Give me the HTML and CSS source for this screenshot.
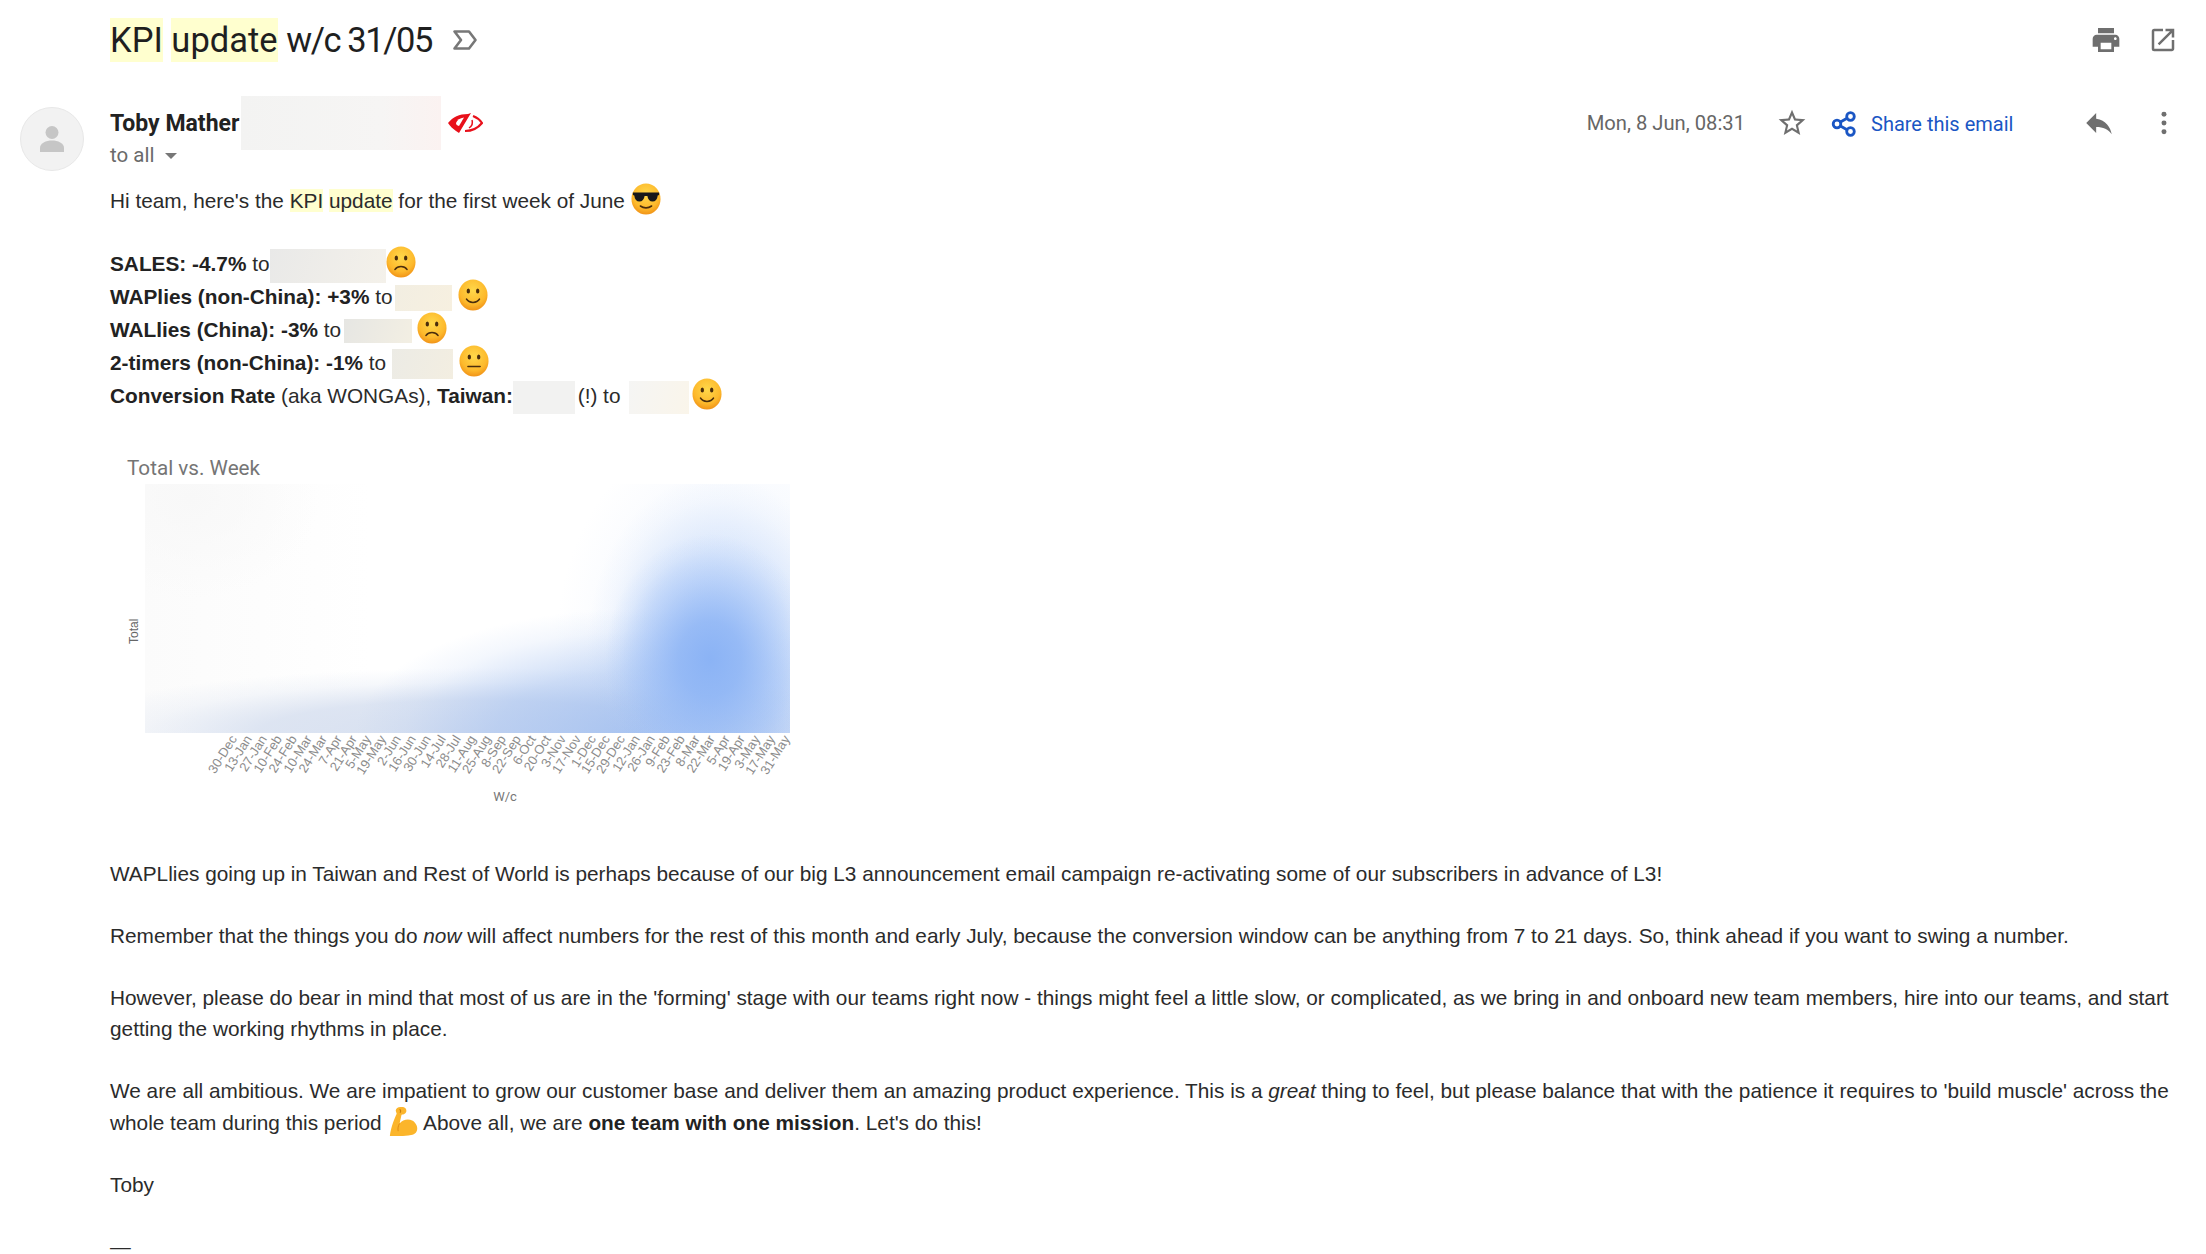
FILE: index.html
```html
<!DOCTYPE html>
<html lang="en">
<head>
<meta charset="utf-8">
<title>KPI update w/c 31/05</title>
<link rel="stylesheet" href="styles.css">
</head>
<body>
<svg class="defs" width="0" height="0" aria-hidden="true">
  <defs>
    <radialGradient id="face" cx="50%" cy="35%" r="70%">
      <stop offset="0" stop-color="#ffd84a"/><stop offset=".65" stop-color="#fdb92c"/><stop offset="1" stop-color="#ee8a12"/>
    </radialGradient>
    <symbol id="sad" viewBox="0 0 32 32" preserveAspectRatio="none">
      <circle cx="16" cy="16" r="15.5" fill="url(#face)"/>
      <ellipse cx="11" cy="12" rx="1.8" ry="2.6" fill="#4a2d0c"/><ellipse cx="21" cy="12" rx="1.8" ry="2.6" fill="#4a2d0c"/>
      <path d="M9.5 23.5c3-4 10-4 13 0" fill="none" stroke="#4a2d0c" stroke-width="1.5" stroke-linecap="round"/>
    </symbol>
    <symbol id="smile" viewBox="0 0 32 32" preserveAspectRatio="none">
      <circle cx="16" cy="16" r="15.5" fill="url(#face)"/>
      <ellipse cx="11" cy="12" rx="1.8" ry="2.6" fill="#4a2d0c"/><ellipse cx="21" cy="12" rx="1.8" ry="2.6" fill="#4a2d0c"/>
      <path d="M9 20c3 4.500 11 4.500 14 0" fill="none" stroke="#4a2d0c" stroke-width="1.500" stroke-linecap="round"/>
    </symbol>
    <symbol id="neutral" viewBox="0 0 32 32" preserveAspectRatio="none">
      <circle cx="16" cy="16" r="15.500" fill="url(#face)"/>
      <ellipse cx="11" cy="12" rx="1.800" ry="2.600" fill="#4a2d0c"/><ellipse cx="21" cy="12" rx="1.800" ry="2.600" fill="#4a2d0c"/>
      <path d="M9.500 21.500h13" fill="none" stroke="#4a2d0c" stroke-width="1.600" stroke-linecap="round"/>
    </symbol>
  </defs>
</svg>

<header class="subject-bar">
  <h1 class="subject"><mark class="hl hl-title">KPI</mark> <mark class="hl hl-title">update</mark> <span class="subject-rest">w/c 31/05</span></h1>
  <svg class="label-icon" viewBox="0 0 26 22"><path d="M2.500 2.500h14.500l6.500 8.500-6.500 8.500H2.500L9 11z" fill="none" stroke="#777" stroke-width="2.600" stroke-linejoin="round"/></svg>
  <div class="subject-actions">
    <svg class="print-icon" viewBox="0 0 24 24"><path fill="#6f6f6f" d="M19 8H5c-1.660 0-3 1.340-3 3v6h4v4h12v-4h4v-6c0-1.660-1.340-3-3-3zm-3 11H8v-5h8v5zm3-7c-.550 0-1-.450-1-1s.450-1 1-1 1 .450 1 1-.450 1-1 1zm-1-9H6v4h12V3z"/></svg>
    <svg class="open-icon" viewBox="0 0 24 24"><path fill="#6f6f6f" d="M19 19H5V5h7V3H5a2 2 0 0 0-2 2v14a2 2 0 0 0 2 2h14c1.100 0 2-.900 2-2v-7h-2v7zM14 3v2h3.590l-9.830 9.830 1.410 1.410L19 6.410V10h2V3h-7z"/></svg>
  </div>
</header>

<section class="message">
  <div class="avatar">
    <svg viewBox="0 0 28 30"><circle cx="14" cy="8.500" r="6.500" fill="#c6c6c6"/><path d="M2 28v-4c0-5 6-7.500 12-7.500S26 19 26 24v4z" fill="#c6c6c6"/></svg>
  </div>
  <div class="content">
    <div class="meta">
      <div class="sender">
        <div class="from-line">
          <strong class="name">Toby Mather</strong>
          <span class="redact redact-email"></span>
          <svg class="eye" viewBox="0 0 36 22"><path d="M1 11C6 5 12 2 21 2l3-1-12 20-3-2c-3-2-6-5-8-8z" fill="#e8101a"/><path d="M9 11c1-3 4-5 8-5.500L12 14c-2-.500-3-1.500-3-3z" fill="#fff"/><path d="M26 4c4 1.500 7 4 9 7-4 5-10 8-17 8" fill="none" stroke="#e8101a" stroke-width="2.200"/><path d="M25 8c1 3 0 6-3 8" fill="none" stroke="#e8101a" stroke-width="1.500"/></svg>
        </div>
        <div class="to-line">to all <span class="caret"></span></div>
      </div>
      <div class="meta-right">
        <span class="date">Mon, 8 Jun, 08:31</span>
        <svg class="star" viewBox="0 0 24 24"><path fill="#6f6f6f" d="M22 9.240l-7.190-.620L12 2 9.190 8.630 2 9.240l5.460 4.730L5.820 21 12 17.270 18.180 21l-1.630-7.030L22 9.240zM12 15.400l-3.760 2.270 1-4.280-3.320-2.880 4.380-.380L12 6.100l1.710 4.040 4.380.380-3.320 2.880 1 4.280L12 15.400z"/></svg>
        <span class="share">
          <svg viewBox="0 0 26 26"><g fill="none" stroke="#1a56c4" stroke-width="2.800"><circle cx="6" cy="13" r="3.800"/><circle cx="19.500" cy="5.500" r="3.800"/><circle cx="19.500" cy="20.500" r="3.800"/><path d="M9.500 11l6.500-3.700M9.500 15l6.500 3.700"/></g></svg>
          Share this email
        </span>
        <svg class="reply" viewBox="0 0 24 24"><path fill="#6f6f6f" d="M10 9V5l-7 7 7 7v-4.100c5 0 8.500 1.600 11 5.100-1-5-4-10-11-11z"/></svg>
        <svg class="more" viewBox="0 0 6 24"><circle cx="3" cy="4" r="2.300" fill="#6f6f6f"/><circle cx="3" cy="12" r="2.300" fill="#6f6f6f"/><circle cx="3" cy="20" r="2.300" fill="#6f6f6f"/></svg>
      </div>
    </div>

    <div class="body">
      <p class="greeting">Hi team, here's the <mark class="hl">KPI</mark> <mark class="hl">update</mark> for the first week of June
        <svg class="emoji cool" viewBox="0 0 32 32" preserveAspectRatio="none"><circle cx="16" cy="16" r="15.500" fill="url(#face)"/><path d="M2 9.500h28v2.500l-1.500.500c-.500 4-2.500 6-5.500 6s-5-2-5.500-5.500h-3C14 16.500 12 18.500 9 18.500s-5-2-5.500-6L2 12z" fill="#17171a"/><path d="M10 23c3.500 2.500 8.500 2.500 12 0" fill="none" stroke="#4a2d0c" stroke-width="1.600" stroke-linecap="round"/></svg>
      </p>

      <ul class="kpis">
        <li><b>SALES: -4.7%</b> to<span class="redact r1"></span><svg class="emoji"><use href="#sad"/></svg></li>
        <li><b>WAPlies (non-China): +3%</b> to <span class="redact r2"></span> <svg class="emoji"><use href="#smile"/></svg></li>
        <li><b>WALlies (China): -3%</b> to <span class="redact r3"></span> <svg class="emoji"><use href="#sad"/></svg></li>
        <li><b>2-timers (non-China): -1%</b> to <span class="redact r4"></span> <svg class="emoji"><use href="#neutral"/></svg></li>
        <li><b>Conversion Rate</b> (aka WONGAs), <b>Taiwan:</b><span class="redact r5"></span> (!) to <span class="redact r6"></span><svg class="emoji"><use href="#smile"/></svg></li>
      </ul>

      <figure class="chart">
        <figcaption class="chart-title">Total vs. Week</figcaption>
        <div class="chart-main">
          <div class="y-label"><span>Total</span></div>
          <div class="plot"></div>
        </div>
        <div class="x-ticks">
          <span>30-Dec</span><span>13-Jan</span><span>27-Jan</span><span>10-Feb</span><span>24-Feb</span><span>10-Mar</span><span>24-Mar</span><span>7-Apr</span><span>21-Apr</span><span>5-May</span><span>19-May</span><span>2-Jun</span><span>16-Jun</span><span>30-Jun</span><span>14-Jul</span><span>28-Jul</span><span>11-Aug</span><span>25-Aug</span><span>8-Sep</span><span>22-Sep</span><span>6-Oct</span><span>20-Oct</span><span>3-Nov</span><span>17-Nov</span><span>1-Dec</span><span>15-Dec</span><span>29-Dec</span><span>12-Jan</span><span>26-Jan</span><span>9-Feb</span><span>23-Feb</span><span>8-Mar</span><span>22-Mar</span><span>5-Apr</span><span>19-Apr</span><span>3-May</span><span>17-May</span><span>31-May</span>
        </div>
        <div class="x-label">W/c</div>
      </figure>

      <p>WAPLlies going up in Taiwan and Rest of World is perhaps because of our big L3 announcement email campaign re-activating some of our subscribers in advance of L3!</p>
      <p>Remember that the things you do <i>now</i> will affect numbers for the rest of this month and early July, because the conversion window can be anything from 7 to 21 days. So, think ahead if you want to swing a number.</p>
      <p>However, please do bear in mind that most of us are in the 'forming' stage with our teams right now - things might feel a little slow, or complicated, as we bring in and onboard new team members, hire into our teams, and start getting the working rhythms in place.</p>
      <p>We are all ambitious. We are impatient to grow our customer base and deliver them an amazing product experience. This is a <i>great</i> thing to feel, but please balance that with the patience it requires to 'build muscle' across the whole team during this period
        <svg class="emoji flex" viewBox="0 0 32 32"><path d="M3 30.500C4 22 8 12 10 8L9 5c0-3 3-4.500 6-4 4 0 5 2 5 4 0 3-3 4-5 4l-2 9c3-4 9-5 13-3 4 2 6 7 5 10-1 4-5 5-9 5.500-6 .800-14 .500-19 .500z" fill="#fbb52b"/><path d="M13 18c-1.500 2.500-2 5-1.500 8" fill="none" stroke="#e08a12" stroke-width="1"/><path d="M13 3.500c1 .500 1.500 2 .500 3.500" fill="none" stroke="#c97d0c" stroke-width="1.200"/></svg>
        Above all, we are <b>one team with one mission</b>. Let's do this!</p>
      <p>Toby</p>
      <p class="sig">—</p>
    </div>
  </div>
</section>
</body>
</html>
```

FILE: styles.css
```css
html, body { margin: 0; padding: 0; background: #fff; }
body {
  width: 2206px;
  height: 1254px;
  overflow: hidden;
  font-family: "Liberation Sans", Arial, sans-serif;
  color: #2b2b2b;
}
.defs { display: block; height: 0; }
svg { display: inline-block; }

.subject-bar {
  display: flex;
  align-items: center;
  height: 80px;
  padding: 0 28px 0 110px;
}
.subject {
  margin: 0;
  font: 400 34.500px/44px Roboto, sans-serif;
  color: #1f1f1f;
  white-space: nowrap;
}
.hl { background: #ffffcf; color: inherit; }
.hl-title { display: inline-block; height: 44px; }
.subject-rest { letter-spacing: -1.400px; }
.label-icon { width: 26px; height: 22px; margin-left: 20px; }
.subject-actions { margin-left: auto; display: flex; gap: 26px; align-items: center; }
.print-icon { width: 32px; height: 32px; }
.open-icon { width: 30px; height: 30px; }

.message { display: flex; padding: 0 0 0 20px; }
.avatar {
  width: 64px; height: 64px; flex: none;
  margin-top: 27px;
  border-radius: 50%;
  background: #f2f2f2;
  border: 1px solid #e8e8e8;
  box-sizing: border-box;
  display: flex; align-items: center; justify-content: center;
}
.avatar svg { width: 28px; height: 30px; }
.content { flex: 1; margin-left: 26px; min-width: 0; }

.meta { display: flex; justify-content: space-between; height: 107px; padding-right: 38px; }
.from-line { display: flex; align-items: center; height: 54px; margin-top: 16px; margin-bottom: -7px; }
.name { font: 700 23px/1 Roboto, sans-serif; color: #222; }
.redact { display: inline-block; vertical-align: middle; background: #f3f2f0; }
.redact-email { width: 200px; height: 54px; margin-left: 2px; background: linear-gradient(90deg,#f3f3f2,#f6f5f4 70%,#fbf2f1); }
.eye { width: 36px; height: 22px; margin-left: 6px; }
.to-line { font: 400 20.500px/24px Roboto, sans-serif; color: #6a6a6a; }
.caret {
  display: inline-block; width: 0; height: 0; margin-left: 5px; vertical-align: 3px;
  border-left: 6px solid transparent; border-right: 6px solid transparent; border-top: 6px solid #777;
}
.meta-right { display: flex; align-items: center; height: 44px; margin-top: 21px; }
.date { font: 400 20.200px/1 Roboto, sans-serif; color: #666; }
.star { width: 32px; height: 32px; margin-left: 31px; }
.share {
  display: flex; align-items: center; gap: 14px;
  margin-left: 23px; width: 181px;
  padding-top: 2px;
  font: 400 20px/1 Roboto, sans-serif; color: #1a56c4;
  white-space: nowrap;
}
.share svg { width: 26px; height: 26px; flex: none; }
.reply { width: 34px; height: 34px; margin-left: 70px; }
.more { width: 8px; height: 26px; margin-left: 44px; }

.body { font-size: 20.800px; line-height: 31px; padding-right: 18px; }
.body b { color: #222; }
.body p { margin: 0 0 31px; }
.body p.greeting { margin: -4px 0 29px; line-height: 33px; }
.body p.sig { margin: 0; }
.emoji { width: 30px; height: 32px; vertical-align: -7px; }
.emoji.flex { width: 31px; height: 31px; vertical-align: -7px; }
.kpis { list-style: none; margin: 0; padding: 0; }
.kpis li { height: 32.900px; line-height: 33px; white-space: nowrap; }
.r1 { width: 116px; height: 34px; background: linear-gradient(110deg,#e9e9e8,#f4f1ea); }
.r2 { width: 57px; height: 26px; margin-left: -3px; background: linear-gradient(110deg,#f2eee2,#f7f0e0); }
.r3 { width: 68px; height: 24px; margin-left: -3px; margin-right: -1px; background: linear-gradient(110deg,#e6e6e3,#f3efe3); }
.r4 { width: 61px; height: 30px; background: linear-gradient(110deg,#ecebe5,#f3eee1); }
.r5 { width: 62px; height: 33px; margin-right: -3px; background: #f2f2f1; }
.r6 { width: 60px; height: 33px; margin-left: 3px; margin-right: 3px; background: linear-gradient(110deg,#f5f5f4,#faf5ea); }

.chart { margin: 45px 0 0 0; width: 790px; height: 403px; }
.chart-title { font: 400 20.700px/26px Roboto, sans-serif; color: #757575; padding-left: 17px; }
.chart-main { display: flex; height: 249px; margin-top: 3px; }
.y-label { width: 35px; position: relative; }
.y-label span {
  position: absolute; left: 17px; top: 160px;
  font-size: 12px; line-height: 14px; color: #666;
  transform: rotate(-90deg); transform-origin: 0 0;
}
.plot {
  width: 645px; height: 249px;
  background:
    radial-gradient(ellipse 105px 125px at 565px 175px, rgba(139,179,245,1) 0, rgba(139,179,245,.8) 30%, rgba(139,179,245,.4) 60%, rgba(139,179,245,.1) 85%, rgba(139,179,245,0) 100%),
    radial-gradient(ellipse 130px 175px at 572px 165px, rgba(170,200,248,.65), rgba(170,200,248,.35) 55%, rgba(170,200,248,.08) 85%, rgba(170,200,248,0) 100%),
    radial-gradient(ellipse 280px 125px at 490px 250px, rgba(160,190,240,.85), rgba(160,190,240,.5) 50%, rgba(160,190,240,.12) 82%, rgba(160,190,240,0) 100%),
    radial-gradient(ellipse 430px 65px at 330px 249px, rgba(210,220,238,.9), rgba(210,220,238,.75) 50%, rgba(210,220,238,.22) 78%, rgba(210,220,238,0) 100%),
    radial-gradient(ellipse 180px 230px at 590px 165px, rgba(215,228,250,.45), rgba(215,228,250,.2) 60%, rgba(215,228,250,0) 100%),
    radial-gradient(ellipse 130px 100px at 45px 15px, #f8f8f8, rgba(255,255,255,0) 100%),
    linear-gradient(90deg,#fbfbfb,#fdfdfd 18%,#fff 35%);
}
.x-ticks { display: flex; justify-content: space-between; height: 54px; margin-left: 118px; width: 553px; }
.x-ticks span {
  display: flex; justify-content: flex-end;
  width: 0; white-space: nowrap; font-size: 13px; line-height: 14px; color: #8c8c8c;
  transform: rotate(-58deg); transform-origin: 0 0;
}
.x-label { font: 400 13px/14px Roboto, sans-serif; color: #777; text-align: center; margin-top: 3px; }
```
